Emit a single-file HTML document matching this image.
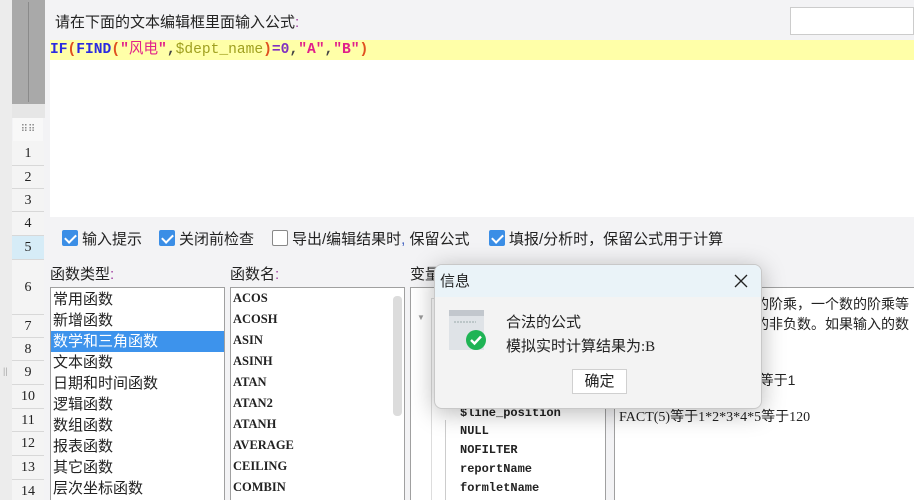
<!DOCTYPE html>
<html style="width:914px;height:500px;overflow:hidden"><head><meta charset="utf-8"><style>
*{margin:0;padding:0;box-sizing:border-box}
body{width:914px;height:500px;overflow:hidden;position:relative;background:#f3f3f5;font-family:"Liberation Sans","Noto Sans CJK SC",sans-serif;font-size:14px;color:#222}
.a{position:absolute}
.rh{position:absolute;left:12px;width:32px;border-bottom:1px solid #d8d8d8;background:#f4f4f4;text-align:center;font-family:"Liberation Serif",serif;font-size:14px;color:#222}
.cb{position:absolute;top:230px;width:16px;height:16px;border:1px solid #3b8ee6;background:#3b8ee6;border-radius:2px}
.cb:after{content:"";position:absolute;left:4px;top:1px;width:5px;height:9px;border:solid #fff;border-width:0 2px 2px 0;transform:rotate(45deg)}
.ct{position:absolute;top:228px;font-size:15px}
.box{position:absolute;top:287px;height:213px;background:#fff;border:1px solid #a0a0a0;border-bottom:none;overflow:hidden}
.li{height:21px;line-height:21px;padding-left:2px;font-size:15px;white-space:nowrap}
.mono{font-family:"Liberation Mono",monospace;font-weight:bold;font-size:12px}
.fn{height:21px;line-height:21px;padding-left:2px;font-family:"Liberation Serif",serif;font-weight:bold;font-size:12.5px}
.tr{position:absolute;left:460px;font-family:"Liberation Mono",monospace;font-weight:bold;font-size:12px;line-height:15px}
</style></head><body>
<div class="a" style="left:0;top:0;width:12px;height:500px;background:#ececec"></div>
<div class="a" style="left:12px;top:0;width:33px;height:104px;background:#a9a9a9"></div>
<div class="a" style="left:28px;top:2px;width:10px;height:100px;border-left:1px solid #8a8a8a"></div>
<div class="a" style="left:12px;top:104px;width:33px;height:14px;background:#e6e6e6"></div>
<div class="a" style="left:13px;top:118px;width:30px;height:23px;background:#f8f8f8;color:#888;font-size:10px;text-align:center;line-height:23px">⠿⠿</div>
<div class="rh" style="top:141px;height:25px;line-height:25px">1</div>
<div class="rh" style="top:166px;height:23px;line-height:23px">2</div>
<div class="rh" style="top:189px;height:23px;line-height:23px">3</div>
<div class="rh" style="top:212px;height:24px;line-height:24px">4</div>
<div class="rh" style="top:236px;height:24px;line-height:24px;background:#d6ecf7">5</div>
<div class="rh" style="top:260px;height:55px;line-height:55px">6</div>
<div class="rh" style="top:315px;height:23px;line-height:23px">7</div>
<div class="rh" style="top:338px;height:23px;line-height:23px">8</div>
<div class="rh" style="top:361px;height:24px;line-height:24px">9</div>
<div class="rh" style="top:385px;height:24px;line-height:24px">10</div>
<div class="rh" style="top:409px;height:23px;line-height:23px">11</div>
<div class="rh" style="top:432px;height:24px;line-height:24px">12</div>
<div class="rh" style="top:456px;height:24px;line-height:24px">13</div>
<div class="rh" style="top:480px;height:20px;line-height:24px;border-bottom:none">14</div>
<div class="a" style="left:3px;top:366px;font-size:9px;color:#aaa;line-height:10px">||</div>
<div class="a" style="left:45px;top:0;width:869px;height:500px;background:#f3f3f5"></div>
<div class="a" style="left:55px;top:11px;font-size:15px">请在下面的文本编辑框里面输入公式<span style="color:#a040a0">:</span></div>
<div class="a" style="left:790px;top:7px;width:124px;height:28px;background:#fff;border:1px solid #ccc"></div>
<div class="a" style="left:50px;top:40px;width:864px;height:177px;background:#fff"></div>
<div class="a" style="left:50px;top:40px;width:864px;height:20px;background:#ffffa8"></div>
<div class="a mono" style="left:50px;top:38px;line-height:20px;font-size:14.6px;color:#2a2ae0;white-space:pre">IF<span style="color:#e05020">(</span>FIND<span style="color:#e05020">(</span><span style="color:#e0208a">"<span style="font-weight:normal;font-family:'Noto Sans CJK SC'">风电</span>"</span><span style="color:#444">,</span><span style="color:#a0a020;font-weight:normal">$dept_name</span><span style="color:#e05020">)</span><span style="color:#8030c0">=0</span><span style="color:#444">,</span><span style="color:#e0208a">"A"</span><span style="color:#444">,</span><span style="color:#e0208a">"B"</span><span style="color:#e05020">)</span></div>
<div class="cb" style="left:62px"></div><div class="ct" style="left:82px">输入提示</div>
<div class="cb" style="left:159px"></div><div class="ct" style="left:179px">关闭前检查</div>
<div class="cb" style="left:272px;background:#fff;border-color:#888"></div><div class="ct" style="left:292px">导出/编辑结果时<span style="color:#4060c0">,</span> 保留公式</div>
<div class="cb" style="left:489px"></div><div class="ct" style="left:509px">填报/分析时，保留公式用于计算</div>
<div class="a" style="left:50px;top:263px;font-size:15px">函数类型<span style="color:#a040a0">:</span></div>
<div class="a" style="left:230px;top:263px;font-size:15px">函数名<span style="color:#a040a0">:</span></div>
<div class="a" style="left:410px;top:263px;font-size:15px">变量</div>
<div class="box" style="left:50px;width:175px;padding-top:1px">
<div class="li">常用函数</div><div class="li">新增函数</div><div class="li" style="background:#3d93ec;color:#fff">数学和三角函数</div><div class="li">文本函数</div><div class="li">日期和时间函数</div><div class="li">逻辑函数</div><div class="li">数组函数</div><div class="li">报表函数</div><div class="li">其它函数</div><div class="li">层次坐标函数</div></div>
<div class="box" style="left:230px;width:175px;padding-top:0">
<div class="fn">ACOS</div><div class="fn">ACOSH</div><div class="fn">ASIN</div><div class="fn">ASINH</div><div class="fn">ATAN</div><div class="fn">ATAN2</div><div class="fn">ATANH</div><div class="fn">AVERAGE</div><div class="fn">CEILING</div><div class="fn">COMBIN</div>
<div class="a" style="left:162px;top:8px;width:9px;height:120px;background:#dcdcdc;border-radius:4px"></div></div>
<div class="box" style="left:410px;width:196px"><div class="a" style="left:20px;top:10px;width:170px;height:203px;border:1px solid #ddd;border-right:none;border-bottom:none"></div><div class="a" style="left:6px;top:26px;font-size:8px;line-height:8px;color:#999">▼</div></div>
<div class="a" style="left:445px;top:420px;width:1px;height:80px;background:#ccc"></div>
<div class="tr" style="top:406px">$line_position</div>
<div class="tr" style="top:424px">NULL</div>
<div class="tr" style="top:443px">NOFILTER</div>
<div class="tr" style="top:462px">reportName</div>
<div class="tr" style="top:481px">formletName</div>
<div class="box" style="left:614px;width:300px;border-right:none;font-size:14px">
<div class="a" style="left:140px;top:6px;white-space:nowrap">的阶乘，一个数的阶乘等</div>
<div class="a" style="left:140px;top:26px;white-space:nowrap">的非负数。如果输入的数</div>
<div class="a" style="left:140px;top:82px;white-space:nowrap">)等于1</div>
<div class="a" style="left:4px;top:118px;white-space:nowrap;font-family:'Liberation Serif','Noto Sans CJK SC',serif">FACT(5)等于1*2*3*4*5等于120</div></div>
<div class="a" style="left:434px;top:264px;width:328px;height:145px;background:#f3f3f3;border:1px solid #c8c8c8;border-radius:8px;box-shadow:0 4px 24px rgba(0,0,0,.28);overflow:hidden">
<div style="height:32px;background:#eaf3f8;position:relative"><span class="a" style="left:5px;top:5px;font-size:15px">信息</span>
<svg class="a" style="left:299px;top:9px" width="14" height="14"><path d="M1 1L13 13M13 1L1 13" stroke="#222" stroke-width="1.3"/></svg></div>
<svg class="a" style="left:13px;top:44px" width="40" height="42"><rect x="1" y="1" width="35" height="40" fill="#dfe3e7"/><rect x="1" y="1" width="35" height="6" fill="#c2c7cd"/><path d="M6 13H28" stroke="#9aa" stroke-dasharray="2 1"/><circle cx="28" cy="31" r="10" fill="#1fb455"/><path d="M23 31l3.5 3.5L33 27.5" stroke="#fff" stroke-width="2.4" fill="none"/></svg>
<div class="a" style="left:71px;top:46px;font-size:15px">合法的公式</div>
<div class="a" style="left:71px;top:70px;font-size:15px">模拟实时计算结果为<span style="font-family:'Liberation Serif'">:B</span></div>
<div class="a" style="left:137px;top:104px;width:55px;height:25px;background:#fff;border:1px solid #d0d0d0;text-align:center;line-height:23px;font-size:15px">确定</div>
</div>
</body></html>
